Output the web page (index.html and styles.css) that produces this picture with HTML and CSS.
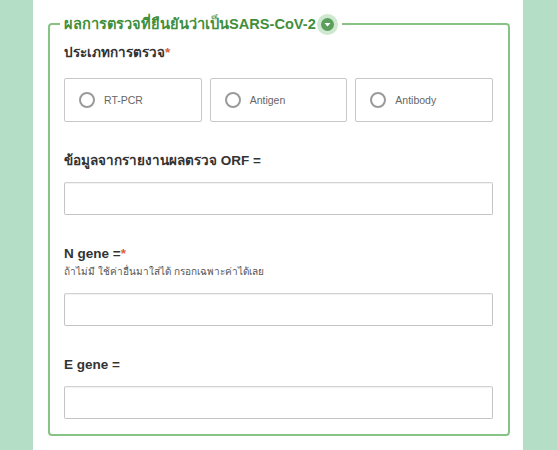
FILE: index.html
```html
<!DOCTYPE html>
<html lang="th">
<head>
    <meta charset="UTF-8">
    <meta name="viewport" content="width=device-width, initial-scale=1.0">
    <title>ผลการตรวจ</title>
    <link rel="stylesheet" href="styles.css">
</head>
<body>
    <div class="panel">
        <fieldset class="section">
            <legend class="section-title">
                ผลการตรวจที่ยืนยันว่าเป็นSARS-CoV-2
                <span class="toggle">
                    <svg width="21" height="21" viewBox="0 0 21 21">
                        <circle cx="10.5" cy="10.5" r="10.5" fill="#cfe8d0"/>
                        <circle cx="10.5" cy="10.5" r="6.5" fill="#5c9f5c"/>
                        <path d="M7.5 9 L13.5 9 L10.5 12.4 Z" fill="#fff"/>
                    </svg>
                </span>
            </legend>

            <div class="field first">
                <div class="label">ประเภทการตรวจ<span class="req">*</span></div>
                <div class="choices">
                    <label class="choice"><span class="radio"></span>RT-PCR</label>
                    <label class="choice"><span class="radio"></span>Antigen</label>
                    <label class="choice"><span class="radio"></span>Antibody</label>
                </div>
            </div>

            <div class="field">
                <div class="label">ข้อมูลจากรายงานผลตรวจ ORF =</div>
                <input type="text" class="text-input">
            </div>

            <div class="field">
                <div class="label">N gene =<span class="req">*</span></div>
                <div class="hint">ถ้าไม่มี ใช้ค่าอื่นมาใส่ได้ กรอกเฉพาะค่าได้เลย</div>
                <input type="text" class="text-input with-hint">
            </div>

            <div class="field">
                <div class="label">E gene =</div>
                <input type="text" class="text-input">
            </div>
        </fieldset>
    </div>
</body>
</html>
```

FILE: styles.css
```css
body {
    margin: 0;
    background-color: #b5dec7; /* mint sides */
    font-family: "Liberation Sans", "Noto Sans", sans-serif;
    color: #333;
}

.panel {
    width: 490px;
    height: 450px;
    margin-left: 33px;
    background: #fff;
    padding: 13px 13px 0 15px;
    box-sizing: border-box;
}

.section {
    margin: 0;
    padding: 9px 15px 15px 14px;
    border: 2px solid #86c384;
    border-radius: 4px;
}

.section-title {
    margin-left: -4px;
    padding: 0 4px;
    line-height: 22px;
    font-size: 14.6px;
    font-weight: bold;
    color: #3f8f3c;
    display: flex;
    align-items: center;
}

.toggle {
    display: inline-flex;
    margin-left: 1px;
}

.field {
    margin-top: 30px;
}

.field.first {
    margin-top: 0;
}

.label {
    font-size: 13.5px;
    font-weight: bold;
    line-height: 18px;
    color: #333;
}

.req {
    color: #e0603c;
}

.hint {
    margin-top: 2px;
    font-size: 10px;
    line-height: 14px;
    color: #555;
}

.choices {
    display: grid;
    grid-template-columns: repeat(3, 1fr);
    gap: 8px;
    margin-top: 16px;
}

.choice {
    display: flex;
    align-items: center;
    height: 44px;
    box-sizing: border-box;
    border: 1px solid #c8c8c8;
    border-radius: 2px;
    padding-left: 14px;
    font-size: 10.5px;
    color: #666;
}

.radio {
    width: 16px;
    height: 16px;
    box-sizing: border-box;
    border: 2px solid #9a9a9a;
    border-radius: 50%;
    margin-right: 9px;
}

.text-input {
    display: block;
    width: 100%;
    height: 33px;
    box-sizing: border-box;
    margin-top: 12px;
    border: 1px solid #c4c4c4;
    border-top-color: #d2d2d2;
    border-radius: 2px;
    box-shadow: inset 0 1px 1px rgba(0, 0, 0, 0.06);
    background: #fff;
}

.text-input.with-hint {
    margin-top: 14px;
}
```
